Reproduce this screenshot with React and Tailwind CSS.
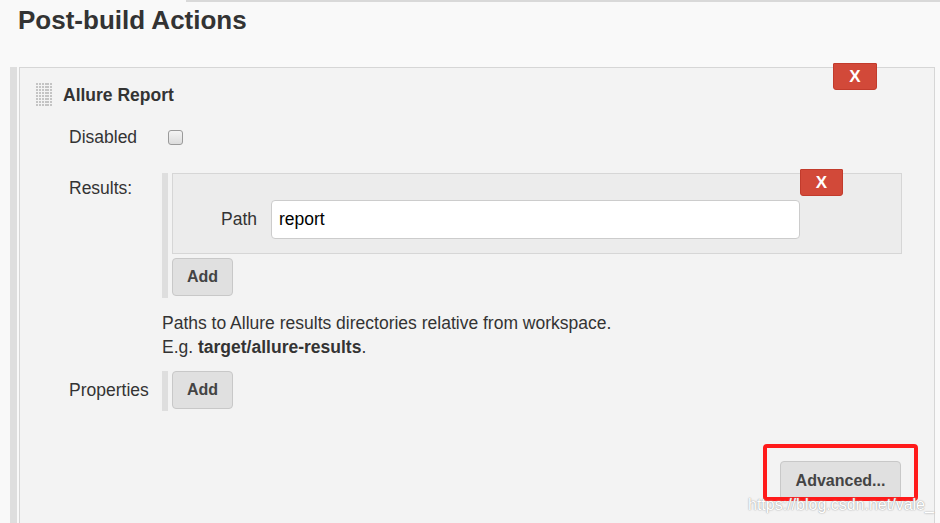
import React from 'react';

const font = { fontFamily: '"Liberation Sans", Arial, sans-serif' };

function RedX({ className }) {
  return (
    <div
      className={`absolute flex items-center justify-center rounded-b-[3px] rounded-t-[1px] border border-[#c23b2c] bg-[#d24939] text-[17px] font-bold text-white ${className}`}
    >
      X
    </div>
  );
}

function GrayButton({ children, className = '' }) {
  return (
    <div
      className={`flex items-center justify-center rounded-[4px] border border-[#c8c8c8] bg-[#e0e0e0] text-[16px] font-bold text-[#444] ${className}`}
    >
      {children}
    </div>
  );
}

function Handle() {
  const dots = [];
  for (let i = 0; i < 48; i++) dots.push(<div key={i} className="h-[2px] w-[2px] bg-[#c4c4c4]" />);
  return <div className="grid h-[24px] w-[16px] grid-cols-6 gap-[1px] content-start">{dots}</div>;
}

export default function App() {
  return (
    <div style={font} className="relative h-[523px] w-[940px] overflow-hidden bg-[#f9f9f9] text-[#333]">
      <div className="ml-[186px] h-[2px] bg-[#d9d9d9]" />

      <h1 className="ml-[18px] mt-[1px] h-[35px] text-[26px] font-bold leading-[35px] text-[#333]">Post-build Actions</h1>

      <div className="ml-[10px] mt-[29px] flex h-[600px]">
        <div className="w-[7px] bg-[#dedede]" />
        <div className="relative ml-[2px] w-[916px] border border-[#d6d6d6] bg-[#f3f3f3]">
          <RedX className="right-[57px] top-[-5px] h-[27px] w-[44px]" />

          <div className="ml-[16px] mt-[15px] flex h-[24px] items-center">
            <Handle />
            <div className="ml-[11px] text-[17.5px] font-bold leading-[24px]">Allure Report</div>
          </div>

          <div className="ml-[49px] mt-[18px] flex h-[24px] items-center">
            <div className="w-[99px] text-[17.5px]">Disabled</div>
            <div className="h-[15px] w-[15px] rounded-[3px] border border-[#9a9a9a] bg-gradient-to-b from-[#f4f4f4] to-[#dcdcdc]" />
          </div>

          <div className="ml-[49px] mt-[24px] flex">
            <div className="w-[93px] pt-[3px] text-[17.5px] leading-[24px]">Results:</div>
            <div className="flex flex-col">
              <div className="flex">
                <div className="w-[6px] bg-[#dedede]" />
                <div className="ml-[4px] flex flex-col pb-[2px]">
                  <div className="relative flex h-[81px] w-[730px] border border-[#d6d6d6] bg-[#ececec] pt-[26px]">
                    <RedX className="right-[58px] top-[-5px] h-[27px] w-[43px]" />
                    <div className="w-[84px] pt-[7px] text-right text-[17.5px] leading-[24px]">Path</div>
                    <div className="ml-[14px] flex h-[39px] w-[529px] items-center rounded-[4px] border border-[#cccccc] bg-white pl-[7px] text-[17.5px] text-black">
                      report
                    </div>
                  </div>
                  <GrayButton className="mt-[4px] h-[38px] w-[61px]">Add</GrayButton>
                </div>
              </div>
              <div className="mt-[13px] text-[17.5px] leading-[24px]">
                <div>Paths to Allure results directories relative from workspace.</div>
                <div>
                  E.g. <span className="font-bold">target/allure-results</span>.
                </div>
              </div>
            </div>
          </div>

          <div className="ml-[49px] mt-[12px] flex">
            <div className="w-[93px] pt-[7px] text-[17.5px] leading-[24px]">Properties</div>
            <div className="flex h-[40px]">
              <div className="w-[6px] bg-[#dedede]" />
              <GrayButton className="ml-[4px] h-[38px] w-[61px]">Add</GrayButton>
            </div>
          </div>

          <div className="mr-[33px] mt-[50px] flex justify-end">
            <GrayButton className="h-[39px] w-[121px]">Advanced...</GrayButton>
          </div>
        </div>
      </div>

      <div className="absolute left-[763px] top-[444px] h-[57px] w-[155px] rounded-[4px] border-[4px] border-[#ff1a1a]" />
      <div
        className="absolute left-[748px] top-[495px] text-[16px] leading-[20px] text-white"
        style={{ textShadow: '0 0 1px #999, 0 0 2px #bbb' }}
      >
        https://blog.csdn.net/vale_
      </div>
    </div>
  );
}
